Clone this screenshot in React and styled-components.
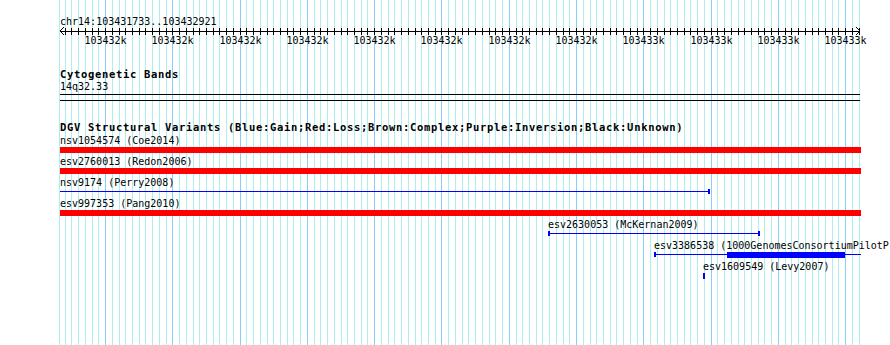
import React from "react";
import styled, { createGlobalStyle } from "styled-components";

const START = 103431733;
const END = 103432921;
const LEFT = 60;
const WIDTH = 800;
const HEIGHT = 345;
const SCALE = WIDTH / (END - START + 1);

const toPx = bp => LEFT + (bp - START) * SCALE;
const clampPx = x => Math.min(Math.max(x, LEFT), LEFT + WIDTH + 1);

const COLORS = {
  gain: "#0000ff",
  loss: "#ff0000",
};

const GRID = [];
for (let bp = 103431730; bp <= END; bp += 10) {
  GRID.push({ x: Math.max(Math.round(toPx(bp)), LEFT - 1), major: bp % 100 === 0, bp });
}

const FEATURES = [
  { id: "nsv1054574", src: "Coe2014", type: "loss", start: 103430800, end: 103433600 },
  { id: "esv2760013", src: "Redon2006", type: "loss", start: 103430200, end: 103434100 },
  { id: "nsv9174", src: "Perry2008", type: "gain", start: 103430500, end: 103432698 },
  { id: "esv997353", src: "Pang2010", type: "loss", start: 103431100, end: 103433900 },
  { id: "esv2630053", src: "McKernan2009", type: "gain", start: 103432458, end: 103432773 },
  {
    id: "esv3386538",
    src: "1000GenomesConsortiumPilotProject",
    type: "gain",
    start: 103432616,
    end: 103434400,
    thickStart: 103432724,
    thickEnd: 103432898,
  },
  {
    id: "esv1609549",
    src: "Levy2007",
    type: "gain",
    start: 103432689,
    end: 103432691,
    thickStart: 103432689,
    thickEnd: 103432691,
  },
];

const GlobalStyle = createGlobalStyle`
  html, body {
    margin: 0;
    padding: 0;
    background: #ffffff;
  }

  body {
    font-family: "DejaVu Sans Mono", "Liberation Mono", monospace;
    color: #000000;
  }
`;

const Panel = styled.div`
  position: relative;
  width: 890px;
  height: ${HEIGHT}px;
  overflow: hidden;
  background: #ffffff;
`;

const GridLayer = styled.svg`
  position: absolute;
  top: 0;
  left: 0;
  display: block;
`;

const Content = styled.div`
  position: relative;
`;

const RulerSvg = styled.svg`
  display: block;
  font-family: "DejaVu Sans Mono", "Liberation Mono", monospace;
  font-size: 10px;
`;

const Track = styled.section`
  width: ${WIDTH}px;
  margin-left: ${LEFT}px;
  margin-top: ${p => p.$top}px;
`;

const TrackTitle = styled.h2`
  margin: 0;
  height: ${p => p.$h || 13}px;
  font: bold 10.5px/13px "DejaVu Sans Mono", "Liberation Mono", monospace;
  letter-spacing: 0.68px;
  white-space: nowrap;
`;

const SmallText = styled.div`
  height: 14px;
  font: 10px/13px "DejaVu Sans Mono", "Liberation Mono", monospace;
  white-space: nowrap;
`;

const Band = styled.div`
  height: 5px;
  border-top: 1px solid #000000;
  border-bottom: 1px solid #000000;
`;

const FeatureList = styled.div`
  display: flex;
  flex-direction: column;
  padding-top: 1px;
`;

const FeatureRow = styled.div`
  display: flex;
  flex-direction: column;
  height: 21px;
`;

const FeatureLabel = styled.div`
  height: 11px;
  font: 10px/11px "DejaVu Sans Mono", "Liberation Mono", monospace;
  white-space: nowrap;
`;

const Lane = styled.div`
  position: relative;
  height: 6px;
  margin-top: 1px;
`;

const Bar = styled.div`
  position: absolute;
  top: 0;
  height: 6px;
  background: ${p => p.$color};
`;

const Stem = styled.div`
  position: absolute;
  top: 2px;
  height: 1px;
  background: ${p => p.$color};
`;

const Tick = styled.div`
  position: absolute;
  top: 0;
  width: 2px;
  height: 5px;
  background: ${p => p.$color};
`;

const Grid = () => (
  <GridLayer width="890" height={HEIGHT} shapeRendering="crispEdges">
    {GRID.map(g => (
      <rect key={g.bp} x={g.x} y="0" width="1" height={HEIGHT} fill={g.major ? "#87cefa" : "#afeeee"} />
    ))}
  </GridLayer>
);

const majorLabel = bp => `${Math.round((bp - 1) / 1000)}k`;

const Ruler = () => {
  const ticks = GRID.filter(g => g.x >= LEFT && g.x < LEFT + WIDTH);
  return (
    <RulerSvg width="890" height="50">
      <text x={LEFT} y="25">
        chr14:{START}..{END}
      </text>
      <g shapeRendering="crispEdges">
        <rect x={LEFT} y="31" width={WIDTH} height="1" fill="#000" />
        {ticks.map(t => (
          <rect key={t.bp} x={t.x} y="28" width="1" height="7" fill="#000" />
        ))}
      </g>
      <polyline points="64,27 60,31 64,35" fill="none" stroke="#000" strokeWidth="1" />
      <polyline points="856,27 860,31 856,35" fill="none" stroke="#000" strokeWidth="1" />
      {GRID.filter(g => g.major).map(g => (
        <text key={g.bp} x={g.x + 0.5} y="44" textAnchor="middle">
          {majorLabel(g.bp)}
        </text>
      ))}
    </RulerSvg>
  );
};

const Glyph = ({ f }) => {
  const color = COLORS[f.type];
  const sx = toPx(f.start);
  const ex = toPx(f.end + 1);
  const l = Math.round(clampPx(sx)) - LEFT;
  const r = Math.round(clampPx(ex)) - LEFT;

  if (f.type === "loss") {
    return <Bar $color={color} style={{ left: l, width: r - l }} />;
  }

  const parts = [];
  if (r - l > 2) {
    parts.push(<Stem key="stem" $color={color} style={{ left: l, width: r - l }} />);
    if (sx >= LEFT) parts.push(<Tick key="ts" $color={color} style={{ left: l }} />);
    if (ex <= LEFT + WIDTH) parts.push(<Tick key="te" $color={color} style={{ left: r - 2 }} />);
  }
  if (f.thickStart) {
    const tl = Math.round(clampPx(toPx(f.thickStart))) - LEFT;
    const tr = Math.round(clampPx(toPx(f.thickEnd + 1))) - LEFT;
    parts.push(<Bar key="thick" $color={color} style={{ left: tl, width: Math.max(tr - tl, 2) }} />);
  }
  return <>{parts}</>;
};

const Feature = ({ f }) => {
  const labelLeft = Math.round(clampPx(toPx(f.start))) - LEFT;
  return (
    <FeatureRow>
      <FeatureLabel style={{ paddingLeft: labelLeft }}>
        {f.id} ({f.src})
      </FeatureLabel>
      <Lane>
        <Glyph f={f} />
      </Lane>
    </FeatureRow>
  );
};

export default function App() {
  return (
    <>
      <GlobalStyle />
      <Panel>
        <Grid />
        <Content>
          <Ruler />
          <Track $top={18}>
            <TrackTitle $h={12}>Cytogenetic Bands</TrackTitle>
            <SmallText>14q32.33</SmallText>
            <Band />
          </Track>
          <Track $top={20}>
            <TrackTitle>
              DGV Structural Variants (Blue:Gain;Red:Loss;Brown:Complex;Purple:Inversion;Black:Unknown)
            </TrackTitle>
            <FeatureList>
              {FEATURES.map(f => (
                <Feature key={f.id} f={f} />
              ))}
            </FeatureList>
          </Track>
        </Content>
      </Panel>
    </>
  );
}
